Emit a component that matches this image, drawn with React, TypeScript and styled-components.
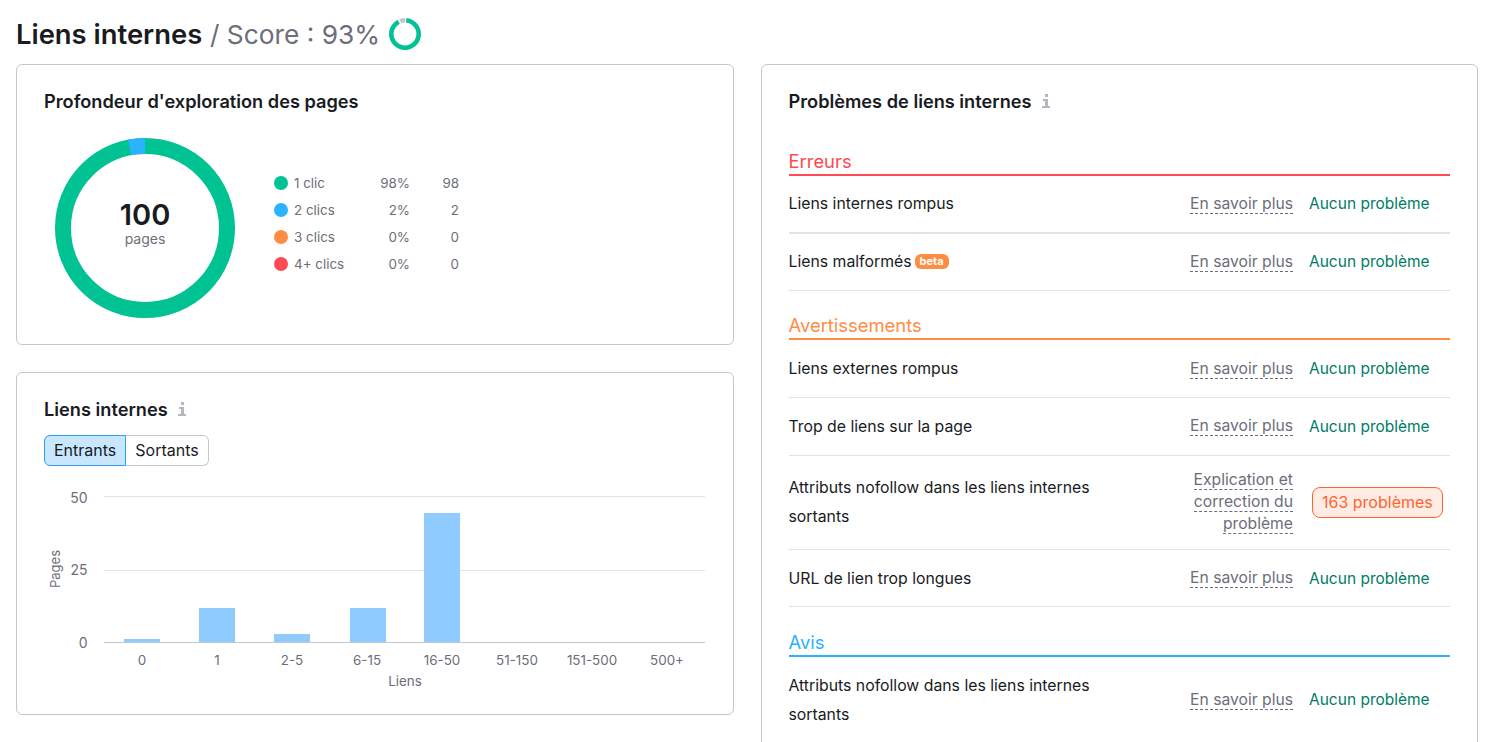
import styled, { createGlobalStyle } from "styled-components";

const GlobalStyle = createGlobalStyle`
  html, body {
    margin: 0;
    height: 100%;
    overflow: hidden;
    background: #fff;
  }
  body {
    font-family: Inter, "Noto Sans", sans-serif;
    color: #191b23;
  }
`;

const Page = styled.div`
  padding: 16px 24px 0 16px;
`;

const Header = styled.h1`
  display: flex;
  align-items: center;
  gap: 9px;
  margin: 0 0 12px;
  height: 36px;
  font-size: 27.4px;
  line-height: 37px;
  font-weight: 400;
  white-space: nowrap;
`;

const HeaderStrong = styled.strong`
  font-weight: 600;
`;

const HeaderMuted = styled.span`
  font-size: 26.3px;
  color: #6c6e79;
`;

const Columns = styled.div`
  display: grid;
  grid-template-columns: 1fr 1fr;
  gap: 27px;
  align-items: start;
`;

const LeftColumn = styled.div`
  display: flex;
  flex-direction: column;
  gap: 27px;
`;

const Card = styled.section<{ $height?: number }>`
  box-sizing: border-box;
  border: 1px solid #c4c7cf;
  border-radius: 6px;
  padding: 25px 27px;
  background: #fff;
  ${(p) => (p.$height ? `height: ${p.$height}px;` : "")}
`;

const CardTitle = styled.h2`
  display: flex;
  align-items: center;
  gap: 10px;
  margin: 0;
  font-size: 18.2px;
  line-height: 22px;
  font-weight: 600;
`;

const DepthBody = styled.div`
  display: flex;
  align-items: flex-start;
  margin-top: 26px;
  padding-left: 11px;
`;

const DonutWrap = styled.div`
  position: relative;
  width: 180px;
  height: 180px;
`;

const DonutLabel = styled.div`
  position: absolute;
  inset: 0;
  display: flex;
  flex-direction: column;
  align-items: center;
  justify-content: center;
  padding-bottom: 8px;
  box-sizing: border-box;
`;

const DonutValue = styled.div`
  font-size: 29px;
  line-height: 30px;
  font-weight: 600;
`;

const DonutUnit = styled.div`
  font-size: 14px;
  line-height: 18px;
  color: #6c6e79;
`;

const Legend = styled.div`
  display: flex;
  flex-direction: column;
  margin: 31px 0 0 39px;
`;

const LegendRow = styled.div`
  display: grid;
  grid-template-columns: 14px 122px 49px;
  align-items: center;
  height: 27px;
  font-size: 13.4px;
  color: #6c6e79;
`;

const Dot = styled.span<{ $color: string }>`
  width: 14px;
  height: 14px;
  border-radius: 50%;
  background: ${(p) => p.$color};
`;

const LegendName = styled.span`
  display: flex;
  justify-content: space-between;
  padding-left: 6px;
`;

const LegendNum = styled.span`
  text-align: right;
`;

const Toggle = styled.div`
  display: inline-flex;
  margin-top: 15px;
`;

const ToggleButton = styled.div<{ $active?: boolean }>`
  box-sizing: border-box;
  height: 31px;
  padding: 0 9px;
  font-size: 16px;
  line-height: 29px;
  border: 1px solid ${(p) => (p.$active ? "#2d9ff0" : "#c4c7cf")};
  background: ${(p) => (p.$active ? "#c8e7ff" : "#fff")};
  border-radius: ${(p) => (p.$active ? "6px 0 0 6px" : "0 6px 6px 0")};
  ${(p) => (p.$active ? "" : "border-left: none;")}
`;

const Chart = styled.svg`
  display: block;
  margin-top: 4px;
  font-family: Inter, "Noto Sans", sans-serif;
`;

const Section = styled.div`
  margin-top: 22.3px;
`;

const Sections = styled.div`
  margin-top: 37px;
`;

const SectionTitle = styled.h3<{ $color: string }>`
  margin: 0;
  padding-bottom: 1px;
  font-size: 18.4px;
  line-height: 24px;
  font-weight: 400;
  color: ${(p) => p.$color};
  border-bottom: 2px solid ${(p) => p.$color};
`;

const Row = styled.div<{ $last?: boolean; $thick?: boolean }>`
  display: grid;
  grid-template-columns: 1fr 130px 157px;
  align-items: center;
  box-sizing: border-box;
  min-height: 57.6px;
  padding: ${(p) => (p.$last ? "14px 0" : "13px 0")};
  font-size: 15.8px;
  border-bottom: ${(p) => (p.$last ? "none" : `${p.$thick ? 2 : 1}px solid #e0e1e9`)};
`;

const RowName = styled.div`
  display: flex;
  align-items: center;
  flex-wrap: wrap;
  gap: 3px;
  max-width: 320px;
  line-height: 29px;
`;

const Beta = styled.span`
  height: 15px;
  padding: 0 5px;
  border-radius: 6px;
  background: #ff8c43;
  color: #fff;
  font-size: 11px;
  line-height: 15px;
  font-weight: 700;
`;

const LinkCell = styled.div`
  text-align: right;
  line-height: 22.4px;
`;

const DashedLink = styled.span`
  color: #6c6e79;
  font-size: 15.7px;
  border-bottom: 1px dashed #6c6e79;
`;

const StatusCell = styled.div`
  padding-left: 16px;
  font-size: 15.5px;
  color: #007c65;
  white-space: nowrap;
`;

const IssueBadge = styled.span`
  display: inline-block;
  box-sizing: border-box;
  height: 31px;
  margin-left: 3px;
  padding: 0 9px;
  border: 1px solid #ff642d;
  border-radius: 8px;
  background: #ffece5;
  color: #ff642d;
  font-size: 16px;
  line-height: 29px;
`;

const InfoIcon = () => (
  <svg width="8" height="14" viewBox="0 0 8 14" fill="#b4b6c0" aria-hidden="true">
    <rect x="3" y="0" width="3" height="3" />
    <path d="M1 5h5v7h2v2H0v-2h3V7H1z" />
  </svg>
);

const ScoreRing = () => (
  <svg width="32" height="32" viewBox="0 0 32 32" aria-hidden="true">
    <circle cx="16" cy="16" r="13.7" fill="none" stroke="#00c292" strokeWidth="4.6" />
    <path d="M17.2 2.35 A13.7 13.7 0 0 0 9.8 3.8" fill="none" stroke="#fff" strokeWidth="5.4" />
    <path d="M16 2.3 A13.7 13.7 0 0 0 11.3 3.13" fill="none" stroke="#c4c7cf" strokeWidth="4.6" />
  </svg>
);

const Donut = () => (
  <svg width="180" height="180" viewBox="0 0 180 180" aria-hidden="true">
    <circle cx="90" cy="90" r="82" fill="none" stroke="#00c292" strokeWidth="16" />
    <path d="M90 8 A82 82 0 0 0 74.5 9.5" fill="none" stroke="#2bb3ff" strokeWidth="16" />
  </svg>
);

const legendItems = [
  { name: "1 clic", pct: "98%", count: 98, color: "#00c292" },
  { name: "2 clics", pct: "2%", count: 2, color: "#2bb3ff" },
  { name: "3 clics", pct: "0%", count: 0, color: "#ff8c43" },
  { name: "4+ clics", pct: "0%", count: 0, color: "#ff4953" },
];

const bars = [
  { label: "0", x: 124, top: 639 },
  { label: "1", x: 199, top: 608 },
  { label: "2-5", x: 274, top: 634 },
  { label: "6-15", x: 350, top: 608 },
  { label: "16-50", x: 424, top: 513 },
  { label: "51-150", x: 499, top: 642 },
  { label: "151-500", x: 574, top: 642 },
  { label: "500+", x: 649, top: 642 },
];

// chart is drawn in page coordinates shifted by its own origin (44, 470)
const LinksChart = () => {
  const ox = 44;
  const oy = 470;
  return (
    <Chart width="661" height="226" viewBox={`${ox} ${oy} 661 226`}>
      <line x1="104" x2="705" y1="496.5" y2="496.5" stroke="#e0e1e9" />
      <line x1="104" x2="705" y1="570.5" y2="570.5" stroke="#e0e1e9" />
      {bars.map((b, i) => (
        <g key={b.label}>
          {b.top < 642 && (
            <rect x={b.x} y={b.top} width="36" height={642 - b.top} fill="#8fcbff" />
          )}
          <text x={142 + i * 75} y="665" textAnchor="middle" fontSize="13.4" fill="#6c6e79">
            {b.label}
          </text>
        </g>
      ))}
      <line x1="104" x2="705" y1="642.5" y2="642.5" stroke="#c4c7cf" />
      <text x="87.5" y="503" textAnchor="end" fontSize="14" fill="#6c6e79">50</text>
      <text x="87.5" y="575" textAnchor="end" fontSize="14" fill="#6c6e79">25</text>
      <text x="87.5" y="648" textAnchor="end" fontSize="14" fill="#6c6e79">0</text>
      <text x="405" y="686" textAnchor="middle" fontSize="13.4" fill="#6c6e79">Liens</text>
      <text
        x="60"
        y="569"
        textAnchor="middle"
        fontSize="13"
        fill="#6c6e79"
        transform="rotate(-90 60 569)"
      >
        Pages
      </text>
    </Chart>
  );
};

const Issue = ({
  name,
  beta,
  link = "En savoir plus",
  problems,
  last,
  thick,
}: {
  name: string;
  beta?: boolean;
  link?: string;
  problems?: string;
  last?: boolean;
  thick?: boolean;
}) => (
  <Row $last={last} $thick={thick}>
    <RowName>
      {name}
      {beta && <Beta>beta</Beta>}
    </RowName>
    <LinkCell>
      <DashedLink>{link}</DashedLink>
    </LinkCell>
    <StatusCell>{problems ? <IssueBadge>{problems}</IssueBadge> : "Aucun problème"}</StatusCell>
  </Row>
);

const App = () => {
  return (
    <Page>
      <GlobalStyle />
      <Header>
        <span>
          <HeaderStrong>Liens internes</HeaderStrong> <HeaderMuted>/ Score : 93%</HeaderMuted>
        </span>
        <ScoreRing />
      </Header>
      <Columns>
        <LeftColumn>
          <Card $height={281}>
            <CardTitle>Profondeur d'exploration des pages</CardTitle>
            <DepthBody>
              <DonutWrap>
                <Donut />
                <DonutLabel>
                  <DonutValue>100</DonutValue>
                  <DonutUnit>pages</DonutUnit>
                </DonutLabel>
              </DonutWrap>
              <Legend>
                {legendItems.map((item) => (
                  <LegendRow key={item.name}>
                    <Dot $color={item.color} />
                    <LegendName>
                      {item.name}
                      <LegendNum>{item.pct}</LegendNum>
                    </LegendName>
                    <LegendNum>{item.count}</LegendNum>
                  </LegendRow>
                ))}
              </Legend>
            </DepthBody>
          </Card>
          <Card $height={343}>
            <CardTitle>
              Liens internes
              <InfoIcon />
            </CardTitle>
            <Toggle>
              <ToggleButton $active>Entrants</ToggleButton>
              <ToggleButton>Sortants</ToggleButton>
            </Toggle>
            <LinksChart />
          </Card>
        </LeftColumn>
        <Card>
          <CardTitle>
            Problèmes de liens internes
            <InfoIcon />
          </CardTitle>
          <Sections>
            <Section>
              <SectionTitle $color="#ff4953">Erreurs</SectionTitle>
              <Issue name="Liens internes rompus" thick />
              <Issue name="Liens malformés" beta />
            </Section>
            <Section>
              <SectionTitle $color="#ff8c43">Avertissements</SectionTitle>
              <Issue name="Liens externes rompus" />
              <Issue name="Trop de liens sur la page" />
              <Issue
                name="Attributs nofollow dans les liens internes sortants"
                link="Explication et correction du problème"
                problems="163 problèmes"
              />
              <Issue name="URL de lien trop longues" />
            </Section>
            <Section>
              <SectionTitle $color="#2bb3ff">Avis</SectionTitle>
              <Issue name="Attributs nofollow dans les liens internes sortants" last />
            </Section>
          </Sections>
        </Card>
      </Columns>
    </Page>
  );
};

export default App;
